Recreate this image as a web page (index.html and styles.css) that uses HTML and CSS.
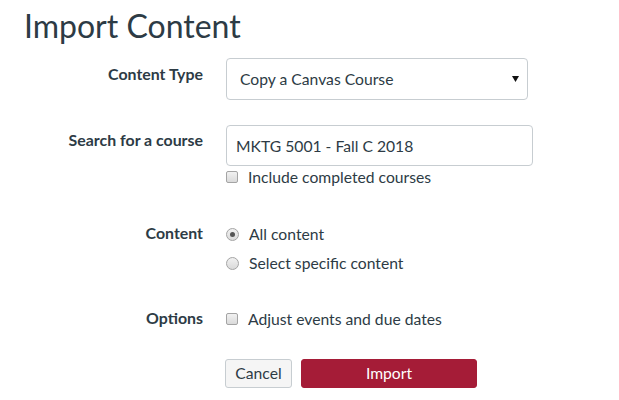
FILE: index.html
```html
<!DOCTYPE html>
<html lang="en">
<head>
<meta charset="utf-8">
<title>Import Content</title>
<link rel="stylesheet" href="styles.css">
</head>
<body>
<h1 class="title">Import Content</h1>
<form class="form">
  <div class="row row-type">
    <label class="label" for="ctype">Content Type</label>
    <div class="control">
      <div class="select-wrap">
        <select id="ctype" class="select"><option>Copy a Canvas Course</option></select>
        <svg class="caret" width="7" height="6" viewBox="0 0 7 6"><path d="M0 0H7L3.5 6Z" fill="#111"/></svg>
      </div>
    </div>
  </div>
  <div class="row row-search">
    <label class="label" for="course">Search for a course</label>
    <div class="control">
      <input id="course" class="text-input" type="text" value="MKTG 5001 - Fall C 2018">
      <label class="opt opt-include"><input type="checkbox" class="check"><span>Include completed courses</span></label>
    </div>
  </div>
  <div class="row row-content">
    <div class="label">Content</div>
    <div class="control options">
      <label class="opt opt-radio"><input type="radio" name="content" class="radio" checked><span>All content</span></label>
      <label class="opt opt-radio"><input type="radio" name="content" class="radio"><span>Select specific content</span></label>
    </div>
  </div>
  <div class="row row-options">
    <div class="label">Options</div>
    <div class="control">
      <label class="opt opt-adjust"><input type="checkbox" class="check"><span>Adjust events and due dates</span></label>
    </div>
  </div>
  <div class="row row-buttons">
    <div></div>
    <div class="control buttons">
      <button type="button" class="btn btn-cancel">Cancel</button>
      <button type="button" class="btn btn-import">Import</button>
    </div>
  </div>
</form>
</body>
</html>
```
FILE: styles.css
```css
html, body {
  margin: 0;
  padding: 0;
  background: #fff;
}
body {
  font-family: "Lato", "Noto Sans", sans-serif;
  font-size: 15.7px;
  line-height: 24px;
  color: #2D3B45;
}
.title {
  margin: 0;
  padding: 7px 0 0 24px;
  font-size: 32px;
  font-weight: 400;
  line-height: 38px;
  color: #2D3B45;
}
.form {
  margin: 0;
}
.row {
  display: grid;
  grid-template-columns: 203px 1fr;
  column-gap: 23px;
  align-items: start;
}
.label {
  text-align: right;
  font-weight: 700;
  font-size: 15.9px;
  padding-top: 3px;
  line-height: 24px;
}
.row-type .label { padding-top: 4px; }
.row-type { margin-top: 13px; }
.row-search { margin-top: 25px; }
.row-content { margin-top: 32px; }
.row-content .label { padding-top: 0; }
.row-options { margin-top: 31px; }
.row-options .label { padding-top: 0; }
.row-buttons { margin-top: 28px; }

.select-wrap {
  position: relative;
  width: 302px;
}
.select {
  appearance: none;
  -webkit-appearance: none;
  box-sizing: border-box;
  width: 302px;
  height: 42px;
  margin: 0;
  padding: 0 30px 0 13px;
  border: 1px solid #C7CDD1;
  border-radius: 4px;
  background: #fff;
  font-family: inherit;
  font-size: 15.7px;
  color: #2D3B45;
}
.caret {
  position: absolute;
  right: 9px;
  top: 18px;
}
.text-input {
  display: block;
  box-sizing: border-box;
  width: 307px;
  height: 41px;
  margin: 0;
  padding: 0 9px;
  border: 1px solid #C7CDD1;
  border-radius: 4px;
  font-family: inherit;
  font-size: 15.7px;
  color: #2D3B45;
  background: #fff;
}
.opt {
  display: flex;
  align-items: center;
  gap: 10px;
  height: 24px;
}
.opt-include { margin-top: -1px; }
.options {
  padding-top: 1px;
  display: flex;
  flex-direction: column;
  gap: 5px;
}
.opt-adjust { padding-top: 1px; }
.check, .radio {
  appearance: none;
  -webkit-appearance: none;
  box-sizing: border-box;
  width: 12px;
  height: 12px;
  margin: 0;
  border: 1px solid #A4A4A4;
  background: linear-gradient(#F1F1F1, #DADADA);
  flex: none;
}
.check {
  border-radius: 2px;
}
.radio {
  border-radius: 50%;
  width: 13px;
  height: 13px;
  position: relative;
}
.radio:checked::after {
  content: "";
  position: absolute;
  left: 3px;
  top: 3px;
  width: 5px;
  height: 5px;
  border-radius: 50%;
  background: #555;
}
.buttons {
  display: flex;
  gap: 9px;
  margin-left: -1px;
}
.btn {
  box-sizing: border-box;
  height: 29px;
  margin: 0;
  border-radius: 3px;
  font-family: inherit;
  font-size: 15.7px;
  line-height: 27px;
  padding: 0;
  cursor: pointer;
}
.btn-cancel {
  width: 67px;
  background: #F5F5F5;
  border: 1px solid #C7CDD1;
  color: #2D3B45;
}
.btn-import {
  width: 176px;
  background: #A51C37;
  border: 1px solid #A51C37;
  color: #fff;
}
```
